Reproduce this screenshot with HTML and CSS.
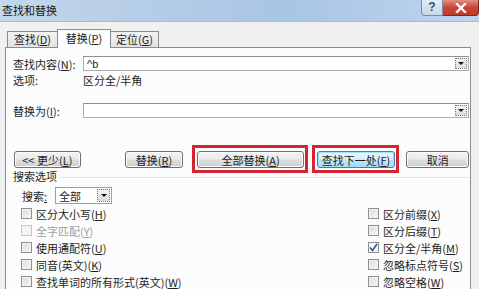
FILE: index.html
```html
<!DOCTYPE html>
<html lang="zh-CN">
<head>
    <meta charset="UTF-8">
    <title>查找和替换</title>
    <link rel="stylesheet" href="styles.css">
</head>
<body>
    <div class="window">
        <div class="titlebar">
            <span class="title">查找和替换</span>
            <div class="caption-buttons">
                <span class="help-btn">?</span>
                <span class="close-btn">
                    <svg width="12" height="10" viewBox="0 0 12 10"><path d="M2 1 L10 9 M10 1 L2 9" stroke="#fff" stroke-width="2.4" stroke-linecap="square"/></svg>
                </span>
            </div>
        </div>

        <div class="tabs">
            <div class="tab tab-find">查找(<u>D</u>)</div>
            <div class="tab tab-active">替换(<u>P</u>)</div>
            <div class="tab tab-goto">定位(<u>G</u>)</div>
        </div>

        <div class="panel">
            <div class="field-row row-find">
                <label class="field-label">查找内容(<u>N</u>):</label>
                <div class="combo">
                    <span class="combo-text">^b</span>
                    <span class="drop-btn"><i class="arrow"></i></span>
                </div>
            </div>
            <div class="field-row row-options">
                <span class="field-label">选项:</span>
                <span class="option-value">区分全/半角</span>
            </div>
            <div class="field-row row-replace">
                <label class="field-label">替换为(<u>I</u>):</label>
                <div class="combo">
                    <span class="combo-text"></span>
                    <span class="drop-btn"><i class="arrow"></i></span>
                </div>
            </div>

            <div class="buttons">
                <button class="btn btn-less">&lt;&lt; 更少(<u>L</u>)</button>
                <button class="btn btn-replace">替换(<u>R</u>)</button>
                <button class="btn btn-all marked">全部替换(<u>A</u>)</button>
                <button class="btn btn-next btn-default marked">查找下一处(<u>F</u>)</button>
                <button class="btn btn-cancel">取消</button>
            </div>

            <div class="section-title">搜索选项</div>

            <div class="search-row">
                <span class="search-label">搜索<u>:</u></span>
                <div class="select">
                    <span class="select-text">全部</span>
                    <span class="drop-btn"><i class="arrow"></i></span>
                </div>
            </div>

            <div class="checks">
                <label class="check"><span class="box"></span>区分大小写(<u>H</u>)</label>
                <label class="check"><span class="box"></span>区分前缀(<u>X</u>)</label>
                <label class="check disabled"><span class="box"></span>全字匹配(<u>Y</u>)</label>
                <label class="check"><span class="box"></span>区分后缀(<u>T</u>)</label>
                <label class="check"><span class="box"></span>使用通配符(<u>U</u>)</label>
                <label class="check"><span class="box checked">
                    <svg width="9" height="9" viewBox="0 0 9 9"><path d="M1 4.5 L3.5 7.5 L8 1" fill="none" stroke="#2a4f9a" stroke-width="1.5"/></svg>
                </span>区分全/半角(<u>M</u>)</label>
                <label class="check"><span class="box"></span>同音(英文)(<u>K</u>)</label>
                <label class="check"><span class="box"></span>忽略标点符号(<u>S</u>)</label>
                <label class="check"><span class="box"></span>查找单词的所有形式(英文)(<u>W</u>)</label>
                <label class="check"><span class="box"></span>忽略空格(<u>W</u>)</label>
            </div>
        </div>
    </div>
</body>
</html>
```

FILE: styles.css
```css
body {
    margin: 0;
    width: 479px;
    height: 289px;
    overflow: hidden;
    font-family: "Noto Sans CJK SC", "Liberation Sans", sans-serif;
    font-size: 11px;
    color: #1e1e1e;
    background: #f0f0f0;
}
u {
    text-decoration: underline;
}
.window {
    height: 289px;
    background: #f0f0f0;
}
.titlebar {
    height: 22px;
    display: flex;
    justify-content: space-between;
    align-items: flex-start;
    background: linear-gradient(to right, #c4d7ec 0%, #b3cbe6 35%, #a9c5e5 60%, #bdd4ed 100%);
    border-bottom: 1px solid #a6bcd4;
    box-sizing: border-box;
}
.title {
    padding: 3px 0 0 2px;
    line-height: 14px;
    color: #1a1a1a;
}
.caption-buttons {
    display: flex;
}
.help-btn {
    width: 22px;
    height: 16px;
    box-sizing: border-box;
    border: 1px solid #7b8ea4;
    border-top: none;
    border-radius: 0 0 0 4px;
    background: linear-gradient(#e3ecf6, #c8d7e8);
    color: #3b4c60;
    font-family: "Liberation Sans", sans-serif;
    font-weight: bold;
    font-size: 12px;
    text-align: center;
    line-height: 15px;
}
.close-btn {
    width: 36px;
    height: 16px;
    box-sizing: border-box;
    border: 1px solid #7e2a24;
    border-top: none;
    border-left: none;
    border-radius: 0 0 4px 0;
    background: linear-gradient(#e08f82, #c94535 50%, #c03a2a);
    display: flex;
    align-items: center;
    justify-content: center;
}

/* tabs */
.tabs {
    display: flex;
    align-items: flex-end;
    height: 25px;
    padding-left: 7px;
}
.tab {
    height: 15px;
    line-height: 15px;
    border: 1px solid #898c95;
    border-bottom: none;
    background: linear-gradient(#f2f2f2, #e3e3e3);
    text-align: center;
    box-sizing: content-box;
}
.tab-find {
    width: 49px;
    border-right: none;
}
.tab-active {
    width: 52px;
    height: 18px;
    line-height: 16px;
    background: #fcfcfc;
    position: relative;
    top: 1px;
    z-index: 1;
}
.tab-goto {
    width: 47px;
    border-left: none;
}

/* panel */
.panel {
    margin-left: 5px;
    width: 466px;
    height: 260px;
    border: 1px solid #898c95;
    background: #fcfcfc;
    padding: 0 1px 0 7px;
    box-sizing: border-box;
    display: flex;
    flex-direction: column;
}
.field-row {
    display: flex;
    align-items: center;
    height: 15px;
}
.row-find {
    margin-top: 8px;
}
.row-options {
    margin-top: 1px;
}
.row-replace {
    margin-top: 16px;
}
.field-label {
    width: 70px;
    flex: none;
}
.option-value {
    color: #1e1e1e;
}
.combo {
    flex: 1;
    height: 15px;
    box-sizing: border-box;
    border: 1px solid #abadb3;
    border-top-color: #8c8f95;
    background: #fff;
    display: flex;
    align-items: center;
    justify-content: space-between;
}
.combo-text {
    padding-left: 3px;
    font-family: "Liberation Sans", sans-serif;
}
.drop-btn {
    width: 12px;
    height: 11px;
    margin-right: 1px;
    box-sizing: border-box;
    border: 1px dotted #7a7a7a;
    background: linear-gradient(#f4f4f4, #dcdcdc);
    display: flex;
    align-items: center;
    justify-content: center;
}
.arrow {
    width: 0;
    height: 0;
    border-left: 3px solid transparent;
    border-right: 3px solid transparent;
    border-top: 3px solid #111;
}

/* buttons */
.buttons {
    display: flex;
    margin-top: 33px;
    height: 17px;
}
.btn {
    height: 17px;
    padding: 0;
    font-family: inherit;
    font-size: 11px;
    color: #1e1e1e;
    border: 1px solid #707070;
    border-radius: 3px;
    background: linear-gradient(#f2f2f2 0%, #ebebeb 45%, #dddddd 55%, #cfcfcf 100%);
    box-shadow: inset 0 0 0 1px #fcfcfc;
    line-height: 14px;
}
.btn-less {
    width: 67px;
    margin-left: 1px;
}
.btn-replace {
    width: 59px;
    margin-left: 44px;
}
.btn-all {
    width: 107px;
    margin-left: 14px;
}
.btn-next {
    width: 79px;
    margin-left: 13px;
}
.btn-cancel {
    width: 63px;
    margin-left: 11px;
}
.btn-default {
    border-color: #3c7fb1;
    background: linear-gradient(#eaf6fd 0%, #d9f0fc 45%, #bee6fd 55%, #a7d9f5 100%);
    box-shadow: inset 0 0 0 1px #9ee4f8;
}
/* red annotation frame drawn over the button */
.marked {
    position: relative;
    overflow: visible;
}
.marked::after {
    content: "";
    position: absolute;
    top: -7px;
    bottom: -6px;
    left: -6px;
    right: -5px;
    border: 3px solid #d42630;
}

/* search options */
.section-title {
    display: flex;
    align-items: center;
    height: 14px;
    margin-top: 1px;
}
.section-title::after {
    content: "";
    flex: 1;
    height: 1px;
    margin: 2px 0 0 4px;
    background: #e2e2e2;
}
.search-row {
    display: flex;
    align-items: center;
    margin: 4px 0 0 9px;
    height: 17px;
}
.search-label {
    width: 33px;
}
.select {
    width: 57px;
    height: 17px;
    box-sizing: border-box;
    border: 1px solid #a0a0a0;
    background: #fff;
    display: flex;
    align-items: center;
    justify-content: space-between;
}
.select-text {
    padding-left: 3px;
}
.select .drop-btn {
    height: 13px;
    width: 13px;
}
.checks {
    display: grid;
    grid-template-columns: 347px auto;
    grid-auto-rows: 17px;
    margin: 1px 0 0 8px;
}
.check {
    display: flex;
    align-items: center;
}
.box {
    width: 11px;
    height: 11px;
    margin-right: 4px;
    box-sizing: border-box;
    border: 1px solid #8f8f8f;
    background: linear-gradient(135deg, #dcdcdc, #f6f6f6);
    box-shadow: inset 0 0 0 1px #f4f4f4;
    display: flex;
    align-items: center;
    justify-content: center;
}
.box.checked {
    background: #f6f6f6;
}
.check.disabled {
    color: #a0a0a0;
}
.check.disabled .box {
    border-color: #c8c8c8;
    background: #f4f4f4;
}
```
